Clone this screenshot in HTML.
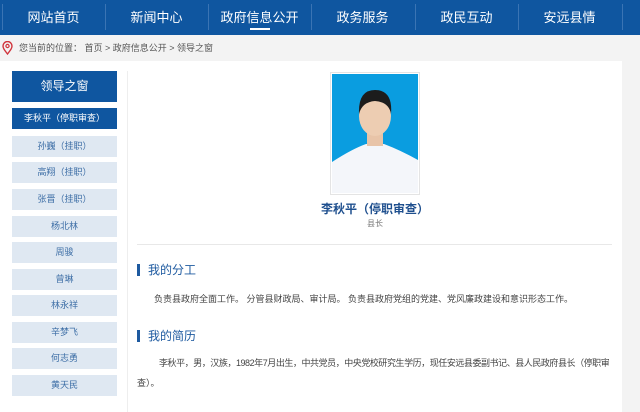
<!DOCTYPE html>
<html><head><meta charset="utf-8"><style>
*{margin:0;padding:0;box-sizing:border-box}
body{width:640px;height:412px;overflow:hidden;background:#f3f3f3;font-family:"Liberation Sans","Noto Sans CJK SC",sans-serif;position:relative}
.nav{position:absolute;left:0;top:0;width:640px;height:35px;background:#0f56a0}
.nav div{position:absolute;top:0;height:35px;line-height:35px;color:#fff;font-size:13px;text-align:center;width:103px}
.sep{position:absolute;top:4px;width:1px;height:26px;background:#3a74b4}
.ul{position:absolute;left:250px;top:28px;width:20px;height:2px;background:#fff}
.bc{position:absolute;left:0;top:35px;width:640px;height:26px;background:#f3f3f3;font-size:9px;color:#555;line-height:26px;padding-left:19px}
.main{position:absolute;left:0;top:61px;width:622px;height:351px;background:#fff}
.side{position:absolute;left:12px;width:105px;background:#dfe8f2;color:#3d6ea6;font-size:9px;text-align:center;height:21px;line-height:21px}
.content{position:absolute;left:127px;top:71px;width:1px;height:341px;background:#eee}
.h{position:absolute;left:137px;font-size:12px;color:#1e5aa0;border-left:3px solid #1e5aa0;padding-left:8px;line-height:12px}
.p{position:absolute;font-size:9px;color:#444}
</style></head><body>
<div class="nav">
<div style="left:2px">网站首页</div><div style="left:105px">新闻中心</div><div style="left:208px">政府信息公开</div><div style="left:311px">政务服务</div><div style="left:415px">政民互动</div><div style="left:518px">安远县情</div>
<span class="sep" style="left:2px"></span><span class="sep" style="left:105px"></span><span class="sep" style="left:208px"></span><span class="sep" style="left:311px"></span><span class="sep" style="left:415px"></span><span class="sep" style="left:518px"></span><span class="sep" style="left:622px"></span>
<span class="ul"></span>
</div>
<div class="bc"><svg style="position:absolute;left:2px;top:6px" width="11" height="14" viewBox="0 0 11 14"><path d="M5.5 13C2 8.5 1 7 1 5a4.5 4.5 0 0 1 9 0c0 2-1 3.5-4.5 8z" fill="none" stroke="#d0343c" stroke-width="1.4"/><circle cx="5.5" cy="5" r="1.6" fill="none" stroke="#d0343c" stroke-width="1.2"/></svg>您当前的位置： 首页 &gt; 政府信息公开 &gt; 领导之窗</div>
<div class="main">
<div class="side" style="top:10px;height:31px;line-height:31px;background:#0f56a0;color:#fff;font-size:12px">领导之窗</div>
<div class="side" style="top:47px;background:#0f56a0;color:#fff">李秋平（停职审查）</div>
<div class="side" style="top:75px">孙巍（挂职）</div>
<div class="side" style="top:101px">高翔（挂职）</div>
<div class="side" style="top:128px">张晋（挂职）</div>
<div class="side" style="top:155px">杨北林</div>
<div class="side" style="top:181px">周骏</div>
<div class="side" style="top:208px">曾琳</div>
<div class="side" style="top:234px">林永祥</div>
<div class="side" style="top:261px">辛梦飞</div>
<div class="side" style="top:287px">何志勇</div>
<div class="side" style="top:314px">黄天民</div>
</div>
<div class="content"></div>
<div style="position:absolute;left:330px;top:72px;width:90px;height:123px;border:1px solid #e4e4e4;background:#fff;padding:1px">
<svg width="86" height="119" viewBox="0 0 86 119"><rect width="86" height="119" fill="#0a9de0"/><path d="M0 88 Q20 75 34 70 L52 70 Q68 76 86 86 L86 119 L0 119Z" fill="#f4f6fa"/><rect x="35" y="52" width="16" height="20" fill="#e8c4a8"/><ellipse cx="43" cy="42" rx="16" ry="20" fill="#edcdb2"/><path d="M27 40 Q26 16 43 16 Q61 16 59 40 Q57 28 43 27 Q30 28 27 40Z" fill="#1c1c1c"/></svg></div>
<div style="position:absolute;left:250px;top:200px;width:250px;text-align:center;font-size:12px;font-weight:bold;color:#1e4f8e">李秋平（停职审查）</div>
<div style="position:absolute;left:250px;top:218px;width:250px;text-align:center;font-size:8px;color:#777">县长</div>
<div style="position:absolute;left:137px;top:244px;width:475px;height:1px;background:#e8e8e8"></div>
<div class="h" style="top:264px">我的分工</div>
<div class="p" style="left:154px;top:292px">负责县政府全面工作。 分管县财政局、审计局。 负责县政府党组的党建、党风廉政建设和意识形态工作。</div>
<div class="h" style="top:330px">我的简历</div>
<div class="p" style="left:159px;top:356px;letter-spacing:-0.45px;white-space:nowrap">李秋平，男，汉族，1982年7月出生，中共党员，中央党校研究生学历，现任安远县委副书记、县人民政府县长（停职审</div>
<div class="p" style="left:137px;top:376px">查）。</div>
</body></html>
